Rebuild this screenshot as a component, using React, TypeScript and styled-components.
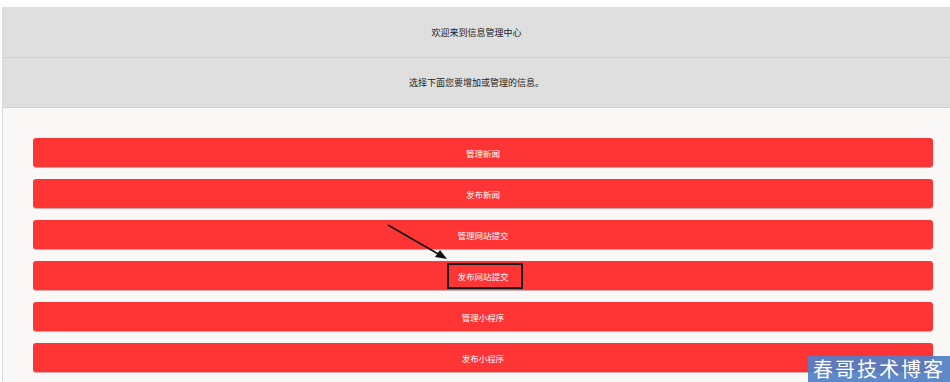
import React from "react";
import styled, { createGlobalStyle } from "styled-components";

const Global = createGlobalStyle`
  html, body { margin: 0; padding: 0; background: #fdfdfd; }
  body { font-family: "Noto Sans CJK SC", "Noto Sans", sans-serif; }
`;

const Page = styled.div`
  position: relative;
  width: 950px;
  height: 382px;
  overflow: hidden;
  padding: 7px 0 0 2px;
  box-sizing: border-box;
`;

const Frame = styled.div`
  border-left: 1px solid #d9d9d9;
  height: 100%;
  display: flex;
  flex-direction: column;
`;

const Band = styled.div<{ $h: number }>`
  height: ${(p) => p.$h}px;
  background: #dfdfdf;
  border-bottom: 1px solid #d0d0d0;
  display: flex;
  align-items: center;
  justify-content: center;
  font-size: 9px;
  color: #222;
  flex-shrink: 0;
  box-sizing: border-box;
`;

const Body = styled.div`
  flex: 1;
  background: #f9f8f7;
  padding: 30px 17px 0 30px;
  display: flex;
  flex-direction: column;
  gap: 12px;
`;

const Btn = styled.div`
  height: 29px;
  background: #ff3435;
  border-radius: 3px;
  box-shadow: 0 1px 0 rgba(150, 30, 30, 0.35);
  color: #fff;
  font-size: 8.5px;
  display: flex;
  align-items: center;
  justify-content: center;
  flex-shrink: 0;
`;

const Highlight = styled.div`
  position: absolute;
  left: 447px;
  top: 263px;
  width: 76px;
  height: 26px;
  border: 2px solid #1a1a1a;
  box-sizing: border-box;
`;

const ArrowLayer = styled.svg`
  position: absolute;
  left: 0;
  top: 0;
  pointer-events: none;
`;

const Watermark = styled.div`
  position: absolute;
  right: 0;
  bottom: 0;
  width: 142px;
  height: 26px;
  background: rgba(80, 128, 198, 0.92);
  color: #fff;
  font-family: "Noto Sans CJK SC", serif;
  font-size: 20px;
  letter-spacing: 2px;
  line-height: 26px;
  padding-left: 5px;
  box-sizing: border-box;
  white-space: nowrap;
`;

const items = ["管理新闻", "发布新闻", "管理网站提交", "发布网站提交", "管理小程序", "发布小程序"];

export default function App() {
  return (
    <>
      <Global />
      <Page>
        <Frame>
          <Band $h={51}>欢迎来到信息管理中心</Band>
          <Band $h={50}>选择下面您要增加或管理的信息。</Band>
          <Body>
            {items.map((t) => (
              <Btn key={t}>{t}</Btn>
            ))}
          </Body>
        </Frame>
        <ArrowLayer width="950" height="382" viewBox="0 0 950 382">
          <line x1="388" y1="225" x2="440" y2="255" stroke="#111" strokeWidth="1.6" />
          <polygon points="447,259 435,257 440,250" fill="#111" />
        </ArrowLayer>
        <Highlight />
        <Watermark>春哥技术博客</Watermark>
      </Page>
    </>
  );
}
